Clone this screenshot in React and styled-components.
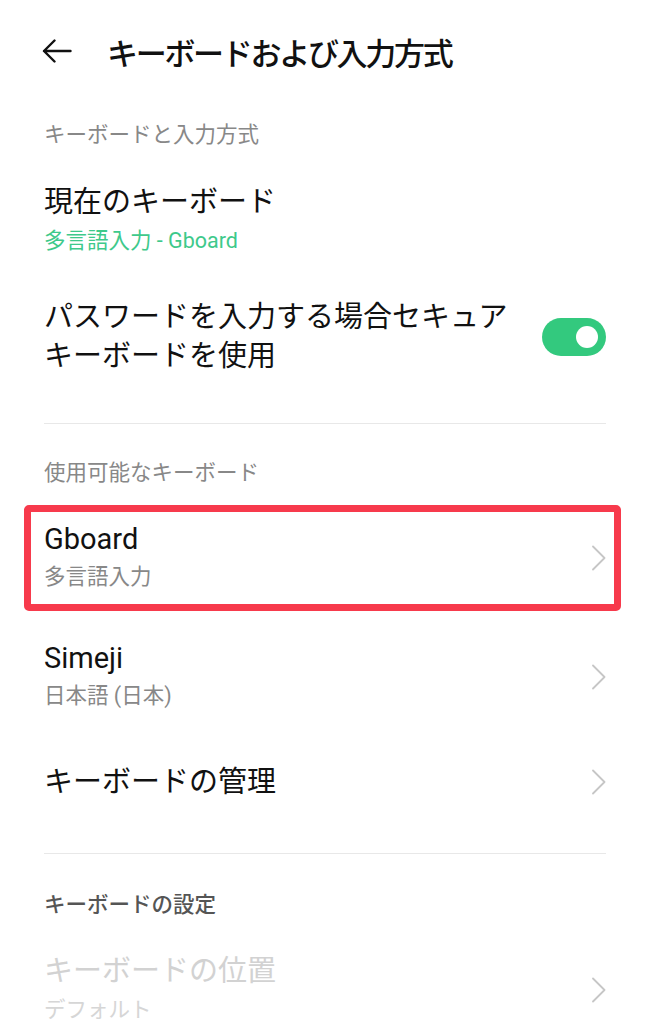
import styled, { createGlobalStyle } from 'styled-components';

const GlobalStyle = createGlobalStyle`
  body {
    margin: 0;
    background: #fff;
    font-family: Roboto, "Noto Sans CJK JP", sans-serif;
  }
`;

const Page = styled.div`
  padding: 0 44px;
  height: 1024px;
  overflow: hidden;
`;

const Header = styled.div`
  height: 102px;
  display: flex;
  align-items: center;
  margin-left: -2px;
  gap: 35px;
`;

const BackIcon = styled.svg`
  width: 30px;
  height: 24px;
  flex-shrink: 0;
`;

const HeaderTitle = styled.h1`
  margin: 0;
  font-family: "Noto Sans CJK JP", sans-serif;
  font-size: 31px;
  font-weight: 500;
  color: #111;
  letter-spacing: -2.3px;
`;

const SectionTitle = styled.div`
  padding-top: ${(p) => p.$top}px;
  padding-bottom: ${(p) => p.$bottom}px;
  font-size: 21.5px;
  line-height: 22px;
  color: ${(p) => (p.$dark ? '#555' : '#888')};
  font-weight: ${(p) => (p.$dark ? 500 : 400)};
`;

const Row = styled.div`
  height: ${(p) => p.$h}px;
  display: flex;
  align-items: center;
  justify-content: space-between;
  gap: 20px;
`;

const RowText = styled.div`
  display: flex;
  flex-direction: column;
  max-width: ${(p) => p.$max || 'none'};
`;

const Title = styled.div`
  font-size: 29px;
  line-height: ${(p) => p.$lh || 38}px;
  color: ${(p) => (p.$disabled ? '#d2d2d2' : '#111')};
`;

const Subtitle = styled.div`
  font-size: 21.5px;
  line-height: 38px;
  color: ${(p) => (p.$accent ? '#3ec98b' : p.$disabled ? '#d6d6d6' : '#888')};
`;

const Divider = styled.div`
  margin-top: ${(p) => p.$top}px;
  height: 1px;
  background: #e8e8e8;
`;

const Highlight = styled.div`
  margin: 0 -15px 0 -20px;
  padding: 0 8px 0 13px;
  border: 7px solid #f73a4c;
  border-radius: 5px;
`;

const Toggle = styled.div`
  width: 64px;
  height: 38px;
  border-radius: 19px;
  background: #33c97e;
  display: flex;
  align-items: center;
  justify-content: flex-end;
  padding-right: 8px;
  box-sizing: border-box;
  flex-shrink: 0;
`;

const Knob = styled.div`
  width: 22px;
  height: 22px;
  border-radius: 50%;
  background: #fff;
`;

const ChevronIcon = styled.svg`
  width: 14px;
  height: 26px;
  flex-shrink: 0;
`;

function Chevron() {
  return (
    <ChevronIcon viewBox="0 0 14 26">
      <path d="M1 1.5 L12.5 13 L1 24.5" fill="none" stroke="#c6c6c6" strokeWidth="1.8" strokeLinecap="round" strokeLinejoin="round" />
    </ChevronIcon>
  );
}

export default function App() {
  return (
    <>
      <GlobalStyle />
      <Page>
        <Header>
          <BackIcon viewBox="0 0 30 24">
            <path d="M28.5 12 H2 M12.5 1.5 L2 12 L12.5 22.5" fill="none" stroke="#111" strokeWidth="2.4" strokeLinecap="round" strokeLinejoin="round" />
          </BackIcon>
          <HeaderTitle>キーボードおよび入力方式</HeaderTitle>
        </Header>

        <SectionTitle $top={22} $bottom={18}>キーボードと入力方式</SectionTitle>

        <Row $h={114}>
          <RowText>
            <Title $lh={40}>現在のキーボード</Title>
            <Subtitle $accent>多言語入力 - Gboard</Subtitle>
          </RowText>
        </Row>

        <Row $h={118}>
          <RowText $max="480px">
            <Title $lh={39}>パスワードを入力する場合セキュアキーボードを使用</Title>
          </RowText>
          <Toggle>
            <Knob />
          </Toggle>
        </Row>

        <Divider $top={27} />

        <SectionTitle $top={38} $bottom={21}>使用可能なキーボード</SectionTitle>

        <Highlight>
          <Row $h={92}>
            <RowText>
              <Title>Gboard</Title>
              <Subtitle>多言語入力</Subtitle>
            </RowText>
            <Chevron />
          </Row>
        </Highlight>

        <Row $h={132}>
          <RowText>
            <Title>Simeji</Title>
            <Subtitle>日本語 (日本)</Subtitle>
          </RowText>
          <Chevron />
        </Row>

        <Row $h={78}>
          <RowText>
            <Title>キーボードの管理</Title>
          </RowText>
          <Chevron />
        </Row>

        <Divider $top={32} />

        <SectionTitle $top={40} $bottom={20} $dark>キーボードの設定</SectionTitle>

        <Row $h={108}>
          <RowText>
            <Title $disabled $lh={40}>キーボードの位置</Title>
            <Subtitle $disabled>デフォルト</Subtitle>
          </RowText>
          <Chevron />
        </Row>
      </Page>
    </>
  );
}
